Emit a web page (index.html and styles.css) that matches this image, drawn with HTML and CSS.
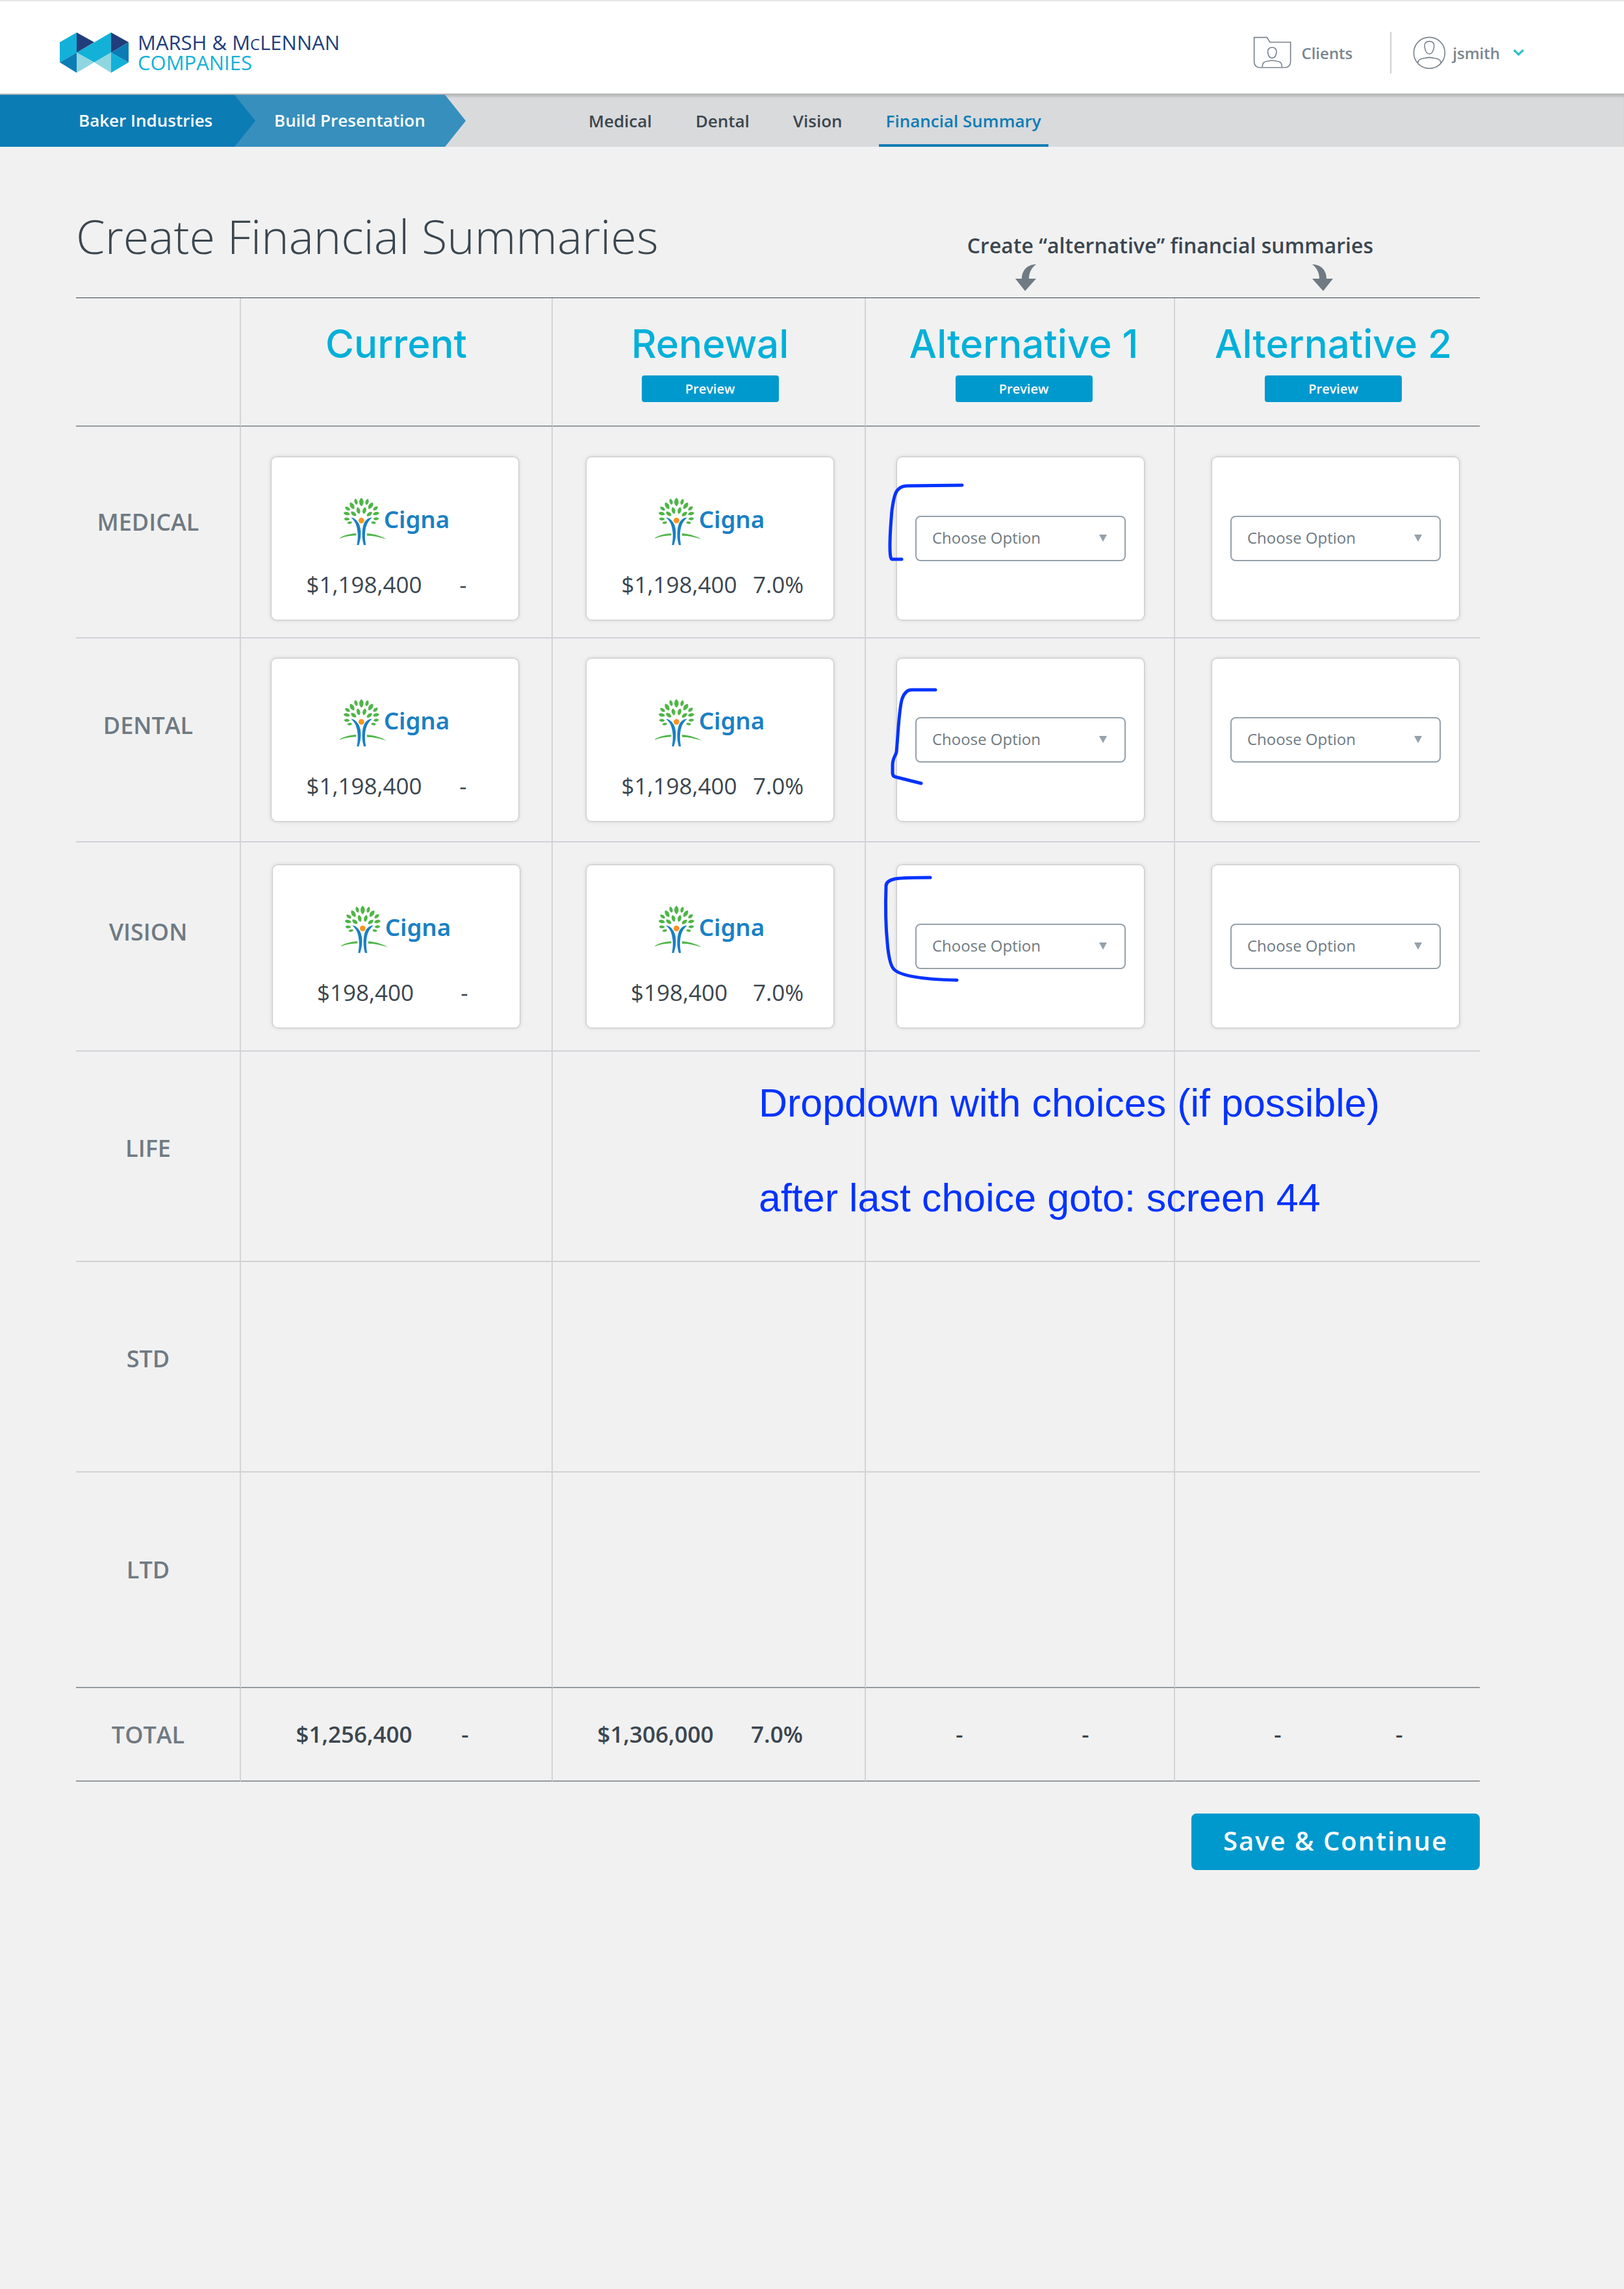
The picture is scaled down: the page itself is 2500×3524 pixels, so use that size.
FILE: index.html
```html
<!DOCTYPE html>
<html lang="en">
<head>
<meta charset="utf-8">
<meta name="viewport" content="width=device-width, initial-scale=1">
<title>Create Financial Summaries</title>
<link rel="stylesheet" href="styles.css">
</head>
<body>
<svg class="sprite" aria-hidden="true">
  <defs>
    <path id="leaf" d="M0-16C12-8 10 10 0 16C-10 10-12-8 0-16Z"/>
    <symbol id="cigna" viewBox="70 78 510 222">
      <g fill="#4fb548">
        <use href="#leaf" transform="translate(170 99) scale(1.2)"/>
        <use href="#leaf" transform="translate(145 97) rotate(-15) scale(.9)"/>
        <use href="#leaf" transform="translate(196 98) rotate(15) scale(.9)"/>
        <use href="#leaf" transform="translate(127 116) rotate(-30) scale(1.1)"/>
        <use href="#leaf" transform="translate(213 116) rotate(35) scale(1.1)"/>
        <use href="#leaf" transform="translate(156 138) rotate(-14)"/>
        <use href="#leaf" transform="translate(184 138) rotate(14)"/>
        <use href="#leaf" transform="translate(106 129) rotate(-55) scale(.85)"/>
        <use href="#leaf" transform="translate(235 128) rotate(52) scale(.85)"/>
        <use href="#leaf" transform="translate(102 152) rotate(-78) scale(.95)"/>
        <use href="#leaf" transform="translate(238 152) rotate(78) scale(.95)"/>
        <use href="#leaf" transform="translate(134 153) rotate(-52) scale(.95)"/>
        <use href="#leaf" transform="translate(207 154) rotate(52) scale(.95)"/>
        <use href="#leaf" transform="translate(103 177) rotate(-86) scale(.82)"/>
        <use href="#leaf" transform="translate(238 176) rotate(86) scale(.82)"/>
        <use href="#leaf" transform="translate(116 194) rotate(-98) scale(.7)"/>
        <use href="#leaf" transform="translate(226 194) rotate(98) scale(.7)"/>
        <path d="M71 264C90 251 125 244 146 244V253C120 254 95 257 71 267Z"/>
        <path d="M195 244C230 246 262 256 286 271C255 260 225 254 196 254Z"/>
      </g>
      <circle cx="170" cy="184" r="13" fill="#f7941e"/>
      <g fill="#1a80c4">
        <path d="M122 170C135 170 150 182 158 198C172 226 169 265 158 298L149 297C156 265 154 235 148 212C144 195 136 183 122 170Z"/>
        <path d="M219 170C205 170 190 180 183 195C171 222 171 265 181 298L191 297C185 270 185 235 192 212C197 195 205 183 219 170Z"/>
        <text x="273" y="220" class="cigna-name">Cigna</text>
      </g>
    </symbol>
  </defs>
</svg>

<header class="topbar">
  <a class="brand" href="#">
    <svg class="brand-mark" viewBox="92 51 106 62" aria-hidden="true">
      <path fill="#13b1d8" d="M92 66L118 51V82L92 97ZM118 82L171 51V82L145 97ZM171 82L198 97L171 113Z"/>
      <path fill="#223d7c" d="M118 51L145 66L118 82ZM171 51L198 66L171 82Z"/>
      <path fill="#0c7cb5" d="M92 97L118 82V113ZM198 66V97L171 82Z"/>
      <path fill="#8fd6e0" d="M118 82L145 97L118 113ZM171 82V113L145 97Z"/>
    </svg>
    <span class="brand-text"><span class="brand-top">MARSH &amp; M<small>C</small>LENNAN</span><span class="brand-sub">COMPANIES</span></span>
  </a>
  <nav class="account" aria-label="Account">
    <a class="account-link" href="#">
      <svg width="60" height="50" viewBox="208 102 180 150" class="line-icon" aria-hidden="true">
        <path d="M213 107H272L286 129H381V218Q381 246 353 246H241Q213 246 213 218Z"/>
        <path d="M296 153C310 153 318 162 316 176C314 192 306 202 296 202C286 202 278 192 276 176C274 162 282 153 296 153Z"/>
        <path d="M251 244C251 221 256 218 296 213C336 218 341 221 341 244"/>
      </svg>
      Clients
    </a>
    <button class="user" type="button">
      <svg width="51" height="51" viewBox="943 98 153 153" class="line-icon" aria-hidden="true">
        <circle cx="1019" cy="174" r="72"/>
        <path d="M1019 121C1036 121 1043 132 1041 146C1038 166 1031 179 1019 179C1007 179 1000 166 997 146C995 132 1002 121 1019 121Z"/>
        <path d="M966 220C966 206 975 200 1019 195C1063 200 1072 206 1072 220"/>
      </svg>
      jsmith
      <svg class="caret" width="18" height="12" viewBox="1402 166 54 36" aria-hidden="true"><path d="M1407 172L1428 193L1450 172"/></svg>
    </button>
  </nav>
</header>

<div class="subbar">
  <nav class="crumbs" aria-label="Breadcrumb">
    <a class="crumb crumb-client" href="#">Baker Industries</a>
    <a class="crumb crumb-step" href="#">Build Presentation</a>
  </nav>
  <nav class="tabs" aria-label="Sections">
    <a class="tab" href="#">Medical</a>
    <a class="tab" href="#">Dental</a>
    <a class="tab" href="#">Vision</a>
    <a class="tab tab-active" href="#" aria-current="page">Financial Summary</a>
  </nav>
</div>

<main class="page">
  <div class="heading">
    <h1 class="title">Create Financial Summaries</h1>
    <div class="hint">
      <p class="hint-text">Create “alternative” financial summaries</p>
      <div class="hint-arrows">
        <svg width="32" height="41" viewBox="0 0 32 41" aria-hidden="true"><path d="M32 0C24 6 21 14 21 22H32L15 41L0 22H10C10 10 18 0 32 0Z"/></svg>
        <svg width="32" height="41" viewBox="0 0 32 41" aria-hidden="true"><path d="M0 0C8 6 11 14 11 22H0L17 41L32 22H22C22 10 14 0 0 0Z"/></svg>
      </div>
    </div>
  </div>

  <table class="summary">
    <colgroup><col class="col-label"><col class="col-current"><col class="col-renewal"><col class="col-alt1"><col class="col-alt2"></colgroup>
    <thead>
      <tr>
        <td></td>
        <th scope="col">Current</th>
        <th scope="col" class="renewal">Renewal<button class="preview" type="button">Preview</button></th>
        <th scope="col" class="alt1">Alternative 1<button class="preview" type="button">Preview</button></th>
        <th scope="col" class="alt2">Alternative 2<button class="preview" type="button">Preview</button></th>
      </tr>
    </thead>
    <tbody>
      <tr class="row-medical">
        <th scope="row">MEDICAL</th>
        <td class="current"><div class="card"><svg class="carrier" role="img" aria-label="Cigna"><use href="#cigna"/></svg><div class="figures"><span>$1,198,400</span><span>-</span></div></div></td>
        <td class="renewal"><div class="card"><svg class="carrier" role="img" aria-label="Cigna"><use href="#cigna"/></svg><div class="figures"><span>$1,198,400</span><span>7.0%</span></div></div></td>
        <td class="alt1"><div class="card card-choice">
          <div class="picker"><select aria-label="Medical, alternative 1"><option>Choose Option</option></select></div>
          <svg class="bracket" width="100" height="250" aria-hidden="true"><path d="M100 43L16 44C-3 44 -5 60 -8 82C-11 115 -13 157 -8 157L7 157"/></svg>
        </div></td>
        <td class="alt2"><div class="card card-choice"><div class="picker"><select aria-label="Medical, alternative 2"><option>Choose Option</option></select></div></div></td>
      </tr>
      <tr class="row-dental">
        <th scope="row">DENTAL</th>
        <td class="current"><div class="card"><svg class="carrier" role="img" aria-label="Cigna"><use href="#cigna"/></svg><div class="figures"><span>$1,198,400</span><span>-</span></div></div></td>
        <td class="renewal"><div class="card"><svg class="carrier" role="img" aria-label="Cigna"><use href="#cigna"/></svg><div class="figures"><span>$1,198,400</span><span>7.0%</span></div></div></td>
        <td class="alt1"><div class="card card-choice">
          <div class="picker"><select aria-label="Dental, alternative 1"><option>Choose Option</option></select></div>
          <svg class="bracket" width="100" height="250" aria-hidden="true"><path d="M59 48L22 48Q13 48 8 61C3 75 2 110 -1 144C-2 149 -7 153 -7 164V176Q-7 181 -3 182L37 192"/></svg>
        </div></td>
        <td class="alt2"><div class="card card-choice"><div class="picker"><select aria-label="Dental, alternative 2"><option>Choose Option</option></select></div></div></td>
      </tr>
      <tr class="row-vision">
        <th scope="row">VISION</th>
        <td><div class="card"><svg class="carrier" role="img" aria-label="Cigna"><use href="#cigna"/></svg><div class="figures"><span>$198,400</span><span>-</span></div></div></td>
        <td class="renewal"><div class="card"><svg class="carrier" role="img" aria-label="Cigna"><use href="#cigna"/></svg><div class="figures"><span>$198,400</span><span>7.0%</span></div></div></td>
        <td class="alt1"><div class="card card-choice">
          <div class="picker"><select aria-label="Vision, alternative 1"><option>Choose Option</option></select></div>
          <svg class="bracket" width="100" height="250" aria-hidden="true"><path d="M51 19C25 19 10 19 -3 21Q-17 24 -17 32C-18 60 -18 90 -15 120Q-12 155 -4 161C8 172 50 176 92 177"/></svg>
        </div></td>
        <td class="alt2"><div class="card card-choice"><div class="picker"><select aria-label="Vision, alternative 2"><option>Choose Option</option></select></div></div></td>
      </tr>
      <tr class="row-empty"><th scope="row">LIFE</th><td></td><td class="noted"><p class="note">Dropdown with choices (if possible)<br>after last choice goto: screen 44</p></td><td></td><td></td></tr>
      <tr class="row-empty"><th scope="row">STD</th><td></td><td></td><td></td><td></td></tr>
      <tr class="row-empty row-last"><th scope="row">LTD</th><td></td><td></td><td></td><td></td></tr>
    </tbody>
    <tfoot>
      <tr>
        <th scope="row">TOTAL</th>
        <td><div class="totals totals-current"><span>$1,256,400</span><span>-</span></div></td>
        <td><div class="totals"><span>$1,306,000</span><span>7.0%</span></div></td>
        <td><div class="totals totals-alt1"><span>-</span><span>-</span></div></td>
        <td><div class="totals"><span>-</span><span>-</span></div></td>
      </tr>
    </tfoot>
  </table>

  <div class="actions"><button class="save" type="button">Save &amp; Continue</button></div>
</main>
</body>
</html>
```
FILE: styles.css
```css
* { box-sizing: border-box; }

body {
  margin: 0;
  background: #f1f1f1;
  color: #3b464f;
  font-family: "Open Sans", "Noto Sans", sans-serif;
}

a { color: inherit; text-decoration: none; }
button, select { font: inherit; }
.sprite { position: absolute; width: 0; height: 0; }

/* Top bar */
.topbar {
  display: flex;
  justify-content: space-between;
  align-items: center;
  height: 146px;
  padding: 16px 153px 0 92px;
  background: #fff;
  border-top: 2px solid #e6e6e6;
  border-bottom: 2px solid #b4b6b7;
}
.brand { display: flex; align-items: center; gap: 14px; }
.brand-mark { width: 106px; height: 62px; }
.brand-text { display: flex; flex-direction: column; font-size: 31px; font-weight: 500; line-height: 29px; color: #13b1d8; }
.brand-top { color: #223d7c; }
.brand-top small { font-size: 24px; }
.account { display: flex; align-items: center; font-size: 24px; font-weight: 600; color: #7a858e; }
.account-link { display: flex; align-items: center; gap: 14px; padding-right: 58px; }
.user {
  display: flex;
  align-items: center;
  gap: 10px;
  height: 64px;
  padding: 0 0 0 33px;
  border: 0;
  border-left: 2px solid #cfcfcf;
  background: none;
  color: inherit;
}
.line-icon { fill: none; stroke: #7a858e; stroke-width: 5; }
.caret { margin-left: 10px; fill: none; stroke: #35bfc7; stroke-width: 10; }

/* Breadcrumb and section tabs */
.subbar {
  display: flex;
  height: 80px;
  background: #d9dadc;
  font-size: 26px;
  font-weight: 600;
  line-height: 36px;
  box-shadow: inset 0 4px 3px -1px #bcbdbf;
}
.crumbs { display: flex; color: #fff; }
.crumb {
  height: 80px;
  padding-top: 21px;
  clip-path: polygon(0 0, calc(100% - 32px) 0, 100% 50%, calc(100% - 32px) 100%, 0 100%);
}
.crumb-client { position: relative; z-index: 1; width: 393px; padding-left: 121px; background: #0c7cb5; }
.crumb-step { width: 356px; margin-left: -32px; padding-left: 61px; background: #368fbd; }
.tabs { display: flex; gap: 45px; margin-left: 178px; }
.tab { height: 80px; padding: 22px 11px 0; border-bottom: 4px solid transparent; }
.tab-active { color: #0c7cb5; border-bottom-color: #0c7cb5; }

/* Page heading */
.page { padding: 88px 222px 0 117px; }
.heading {
  display: flex;
  justify-content: space-between;
  align-items: flex-end;
  padding-bottom: 10px;
}
.title { margin: 0 0 36px; font-size: 72px; font-weight: 300; line-height: 98px; }
.hint { margin-right: 164px; }
.hint-text { margin: 0; font-size: 32px; font-weight: 600; line-height: 44px; }
.hint-arrows {
  display: flex;
  justify-content: space-between;
  height: 48px;
  padding: 7px 62px 0 74px;
  fill: #6f7a83;
}

/* Summary table */
.summary {
  width: 100%;
  table-layout: fixed;
  border-spacing: 0;
  border-top: 1px solid #3b464f;
}
.col-label { width: 254px; }
.col-current { width: 480px; }
.col-renewal { width: 482px; }
.col-alt1 { width: 476px; }
.col-alt2 { width: 469px; }
.summary th, .summary td {
  padding: 0;
  vertical-align: top;
  border-right: 2px solid #d3d4d6;
  border-bottom: 2px solid #d1d2d7;
}
.summary th:last-child, .summary td:last-child { border-right: 0; }
.summary thead tr { height: 198px; }
.summary thead th, .summary thead td, .summary .row-last > *, .summary tfoot tr > * { border-bottom-color: #959a9f; }
.summary thead th {
  padding-top: 36px;
  font-family: "Inter", sans-serif;
  font-size: 60px;
  font-weight: 500;
  line-height: 68px;
  color: #00b0d9;
}
.summary .current { padding-right: 4px; }
.summary .renewal { padding-left: 4px; }
.summary .alt1 { padding-left: 2px; }
.summary .alt2 { padding-left: 25px; }
.summary thead .alt1 { padding-left: 12px; }
.summary thead .alt2 { padding-left: 18px; }
.summary tbody th, .summary tfoot th {
  padding-right: 30px;
  vertical-align: middle;
  font-size: 36px;
  font-weight: 600;
  color: #6f7a83;
}

.preview {
  display: block;
  width: 211px;
  height: 41px;
  margin: 15px auto 0;
  padding: 0;
  border: 0;
  border-radius: 4px;
  background: #0099cd;
  color: #fff;
  font: 600 20px/40px "Open Sans", sans-serif;
}

.row-medical { height: 326px; }
.row-dental { height: 314px; }
.row-vision { height: 322px; }
.row-empty { height: 324px; }
.row-last { height: 332px; }
.summary .row-medical td { padding-top: 47px; }
.summary .row-dental td { padding-top: 31px; }
.summary .row-vision td { padding-top: 35px; }
.summary .row-empty th { padding-bottom: 26px; }
.summary .row-medical th, .summary .row-last th { padding-bottom: 32px; }
.summary .row-dental th, .summary .row-vision th { padding-bottom: 46px; }

.card {
  position: relative;
  width: 380px;
  height: 250px;
  margin: 0 auto;
  padding-top: 62px;
  border-radius: 8px;
  background: #fff;
  box-shadow: 0 0 1px 1px #c8c8c8, 0 0 5px 2px #d8d8d8;
}
.carrier { display: block; width: 170px; height: 74px; margin: 0 auto 36px; }
.cigna-name { font: 600 110px "Noto Sans", sans-serif; }
.figures, .totals {
  display: grid;
  grid-template-columns: 1fr 80px;
  padding: 0 45px 0 30px;
  font-size: 35px;
  line-height: 48px;
  text-align: center;
}
.card-choice { display: grid; place-items: center; padding: 0; }
.picker { position: relative; width: 324px; }
.picker select {
  display: block;
  width: 100%;
  height: 70px;
  padding: 0 24px 4px;
  border: 2px solid #95a1ab;
  border-radius: 8px;
  background: #fff;
  color: #6f7a83;
  font-size: 24px;
  appearance: none;
}
.picker::after {
  content: "";
  position: absolute;
  top: 29px;
  right: 29px;
  width: 12px;
  height: 11px;
  background: #95a1ab;
  clip-path: polygon(0 0, 100% 0, 50% 100%);
  pointer-events: none;
}

/* Reviewer mark-up */
.bracket {
  position: absolute;
  top: 0;
  left: 0;
  overflow: visible;
  fill: none;
  stroke: #0433ff;
  stroke-width: 5;
  stroke-linecap: round;
  stroke-linejoin: round;
  pointer-events: none;
}
.noted { position: relative; }
.note {
  position: absolute;
  top: 6px;
  left: 317px;
  margin: 0;
  color: #0433ff;
  font: 61px/146px "Liberation Sans", Arial, sans-serif;
  white-space: nowrap;
}

.summary tfoot tr { height: 144px; }
.summary tfoot td { vertical-align: middle; }
.totals { grid-template-columns: 284px 90px; padding: 0 0 0 16px; font-weight: 600; }
.totals-current { grid-template-columns: 252px 90px; padding-left: 48px; }
.totals-alt1 { grid-template-columns: 288px 100px; padding-left: 0; }

.actions { display: flex; justify-content: flex-end; padding-top: 49px; }
.save {
  width: 444px;
  height: 87px;
  padding: 0 0 4px;
  border: 0;
  border-radius: 8px;
  background: #0099cd;
  color: #fff;
  font-size: 40px;
  font-weight: 600;
  letter-spacing: 2px;
}
```
